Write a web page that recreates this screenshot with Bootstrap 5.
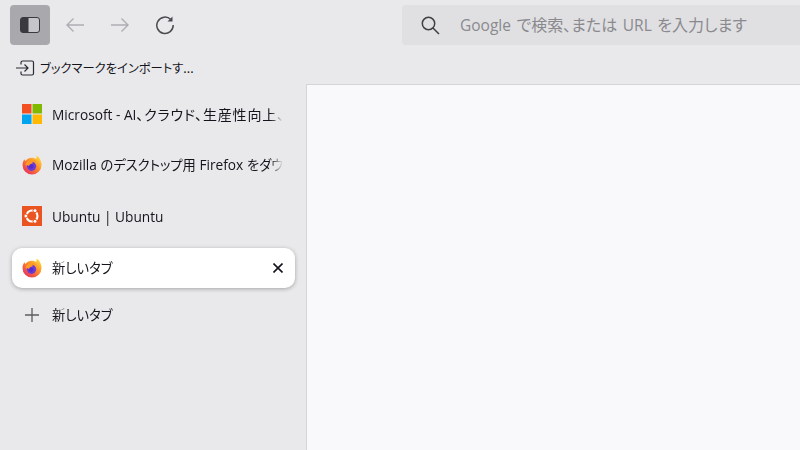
<!DOCTYPE html>
<html lang="ja">
<head>
  <meta charset="UTF-8" />
  <title>新しいタブ</title>
  <link href="https://cdn.jsdelivr.net/npm/bootstrap@5.3.0/dist/css/bootstrap.min.css" rel="stylesheet">
  <style>
    html, body { height: 100%; overflow: hidden; }
    body {
      background-color: #e9e9ec;
      color: #15141a;
      font-family: "Open Sans", "Noto Sans CJK JP", sans-serif;
      font-size: 13.7px;
    }
    .app-frame { width: 800px; height: 450px; }
    .top-strip { height: 50px; padding: 5px 0 5px 10px; }
    .tool-btn { width: 40px; height: 40px; border-radius: 4px; margin-right: 5px; flex: none; }
    .tool-btn.on { background-color: #a9a8ad; }
    .url-box {
      width: 398px;
      height: 40px;
      margin-left: 212px;
      padding-left: 18px;
      background-color: #e0e0e3;
      border-radius: 4px 0 0 4px;
      color: #8a8a8e;
      font-size: 15.5px;
    }
    .url-text { margin-left: 20px; word-spacing: 1.500px; }
    .ja { font-family: "Noto Sans CJK JP", sans-serif; font-feature-settings: "palt"; font-size: 13.3px; }
    .ja-wide { font-size: 14px; letter-spacing: .8px; }
    .url-box .ja { font-size: 16px; }
    .import-row { height: 34px; padding: 2px 0 0 16px; gap: 4px; }
    .import-row .ja { font-size: 12.3px; }
    .lower-area { height: 366px; }
    .side-panel { width: 306px; flex: none; }
    .tab-list { padding: 10px 11px 0 12px; }
    .tab-row { height: 40px; padding-left: 10px; margin-bottom: 11px; border-radius: 10px; gap: 10px; }
    .tab-row.current {
      background-color: #fff;
      box-shadow: 0 1px 4px rgba(0, 0, 0, .3);
      margin-top: 12px;
      margin-bottom: 7px;
    }
    .tab-label {
      width: 231px;
      white-space: nowrap;
      overflow: hidden;
      -webkit-mask-image: linear-gradient(to right, #000 218px, transparent 231px);
      mask-image: linear-gradient(to right, #000 218px, transparent 231px);
    }
    .tab-label.low { padding-top: 2px; }
    .tab-row.current .tab-label { width: 211px; }
    .page-view { background-color: #f9f9fb; border-top: 1px solid #d4d4d8; border-left: 1px solid #d4d4d8; }
  </style>
</head>
<body>
  <svg width="0" height="0" class="position-absolute">
    <defs>
      <linearGradient id="foxBody" x1=".9" y1=".1" x2=".2" y2=".95">
        <stop offset="0" stop-color="#ffd83a"/>
        <stop offset=".45" stop-color="#ff8a2a"/>
        <stop offset="1" stop-color="#e8305c"/>
      </linearGradient>
      <symbol id="firefox" viewBox="0 0 20 20">
        <path d="M14.500.5c2.800 1.700 5 5 5 9.500a9.500 9.500 0 1 1-19 0c0-2.200.8-4.400 2-5.800.2.800.5 1.300 1 1.700C5.200 3.800 7.300 2.800 9.500 2.800c2 0 3.500.4 4.500 1.300.6-1 .8-2.300.5-3.600z" fill="url(#foxBody)"/>
        <circle cx="9.500" cy="11.300" r="4.600" fill="#6a3bd6"/>
        <circle cx="9" cy="11.500" r="2.300" fill="#592acb"/>
        <path d="M3.500 10.500C3.700 7 7 4.700 10.500 5.100c2 .2 3.600 1.200 4.400 2.500-1.300-.7-3-1-4.500-.5.300.5.300 1 .1 1.400-2 .1-3.300 1.100-3.300 2.400-.8-.8-2.700-.9-3.700-.4z" fill="#ff9a24"/>
      </symbol>
    </defs>
  </svg>

  <div class="app-frame d-flex flex-column">
    <div class="top-strip d-flex align-items-center">
      <div class="tool-btn on d-flex align-items-center justify-content-center">
        <svg width="20" height="16" viewBox="0 0 20 16"><rect x=".5" y=".5" width="19" height="15" rx="2.500" fill="#c6c6ca" stroke="#3a393f"/><path d="M3 .5h5.500v15H3a2.500 2.500 0 0 1-2.500-2.500V3A2.500 2.500 0 0 1 3 .5z" fill="#3a393f"/></svg>
      </div>
      <div class="tool-btn d-flex align-items-center justify-content-center">
        <svg width="20" height="16" viewBox="0 0 20 16" fill="none" stroke="#aeaeb2" stroke-width="1.400"><path d="M19 8H2M8.500 1.500 2 8l6.500 6.500"/></svg>
      </div>
      <div class="tool-btn d-flex align-items-center justify-content-center">
        <svg width="20" height="16" viewBox="0 0 20 16" fill="none" stroke="#aeaeb2" stroke-width="1.400"><path d="M1 8h17M11.500 1.500 18 8l-6.500 6.500"/></svg>
      </div>
      <div class="tool-btn d-flex align-items-center justify-content-center">
        <svg width="20" height="20" viewBox="0 0 20 20" fill="none" stroke="#4a4a4f" stroke-width="1.500"><path d="M15.800 4.500A8.200 8.200 0 1 0 18.200 10"/><path d="M17.500 1.500v5h-5z" fill="#4a4a4f" stroke="none"/></svg>
      </div>
      <div class="url-box d-flex align-items-center">
        <svg width="20" height="20" viewBox="0 0 20 20" fill="none" stroke="#3f3f44" stroke-width="1.500" class="flex-shrink-0"><circle cx="8.500" cy="8.500" r="6.200"/><path d="m13 13 6 6"/></svg>
        <span class="url-text">Google <span class="ja">で検索、または</span> URL <span class="ja">を入力します</span></span>
      </div>
    </div>

    <div class="import-row d-flex align-items-center">
      <svg width="20" height="16" viewBox="0 0 20 16" fill="none" stroke="#2b2a33" stroke-width="1.200" class="flex-shrink-0"><path d="M5 4.500V2.500A1.500 1.500 0 0 1 6.500 1H16a1.500 1.500 0 0 1 1.500 1.500v11A1.500 1.500 0 0 1 16 15H6.500A1.500 1.500 0 0 1 5 13.500V11.500"/><path d="M0 8h12M8.500 4.500 12 8l-3.500 3.500"/></svg>
      <span class="ja">ブックマークをインポートす...</span>
    </div>

    <div class="lower-area d-flex">
      <div class="side-panel">
        <div class="tab-list">
          <div class="tab-row d-flex align-items-center">
            <svg width="20" height="20" viewBox="0 0 20 20" class="flex-shrink-0"><rect width="9.500" height="9.500" fill="#f25022"/><rect x="10.500" width="9.500" height="9.500" fill="#7fba00"/><rect y="10.500" width="9.500" height="9.500" fill="#00a4ef"/><rect x="10.500" y="10.500" width="9.500" height="9.500" fill="#ffb900"/></svg>
            <div class="tab-label low">Microsoft - AI<span class="ja ja-wide">、クラウド、生産性向上、</span></div>
          </div>
          <div class="tab-row d-flex align-items-center">
            <svg width="20" height="20" class="flex-shrink-0"><use href="#firefox"/></svg>
            <div class="tab-label">Mozilla <span class="ja">のデスクトップ用</span> Firefox <span class="ja">をダウ</span></div>
          </div>
          <div class="tab-row d-flex align-items-center">
            <svg width="20" height="20" viewBox="0 0 20 20" class="flex-shrink-0"><rect width="20" height="20" fill="#e95420"/><circle cx="10" cy="10" r="5.500" fill="none" stroke="#fff" stroke-width="2.100"/><circle cx="13" cy="4.700" r="2" fill="#fff" stroke="#e95420"/><circle cx="3.900" cy="10" r="2" fill="#fff" stroke="#e95420"/><circle cx="13" cy="15.300" r="2" fill="#fff" stroke="#e95420"/></svg>
            <div class="tab-label low">Ubuntu | Ubuntu</div>
          </div>
          <div class="tab-row current d-flex align-items-center">
            <svg width="20" height="20" class="flex-shrink-0"><use href="#firefox"/></svg>
            <div class="tab-label"><span class="ja">新しいタブ</span></div>
            <svg width="10" height="10" viewBox="0 0 10 10" stroke="#15141a" stroke-width="1.600" class="flex-shrink-0"><path d="m.5.500 9 9M9.500.500l-9 9"/></svg>
          </div>
          <div class="tab-row d-flex align-items-center">
            <svg width="20" height="20" viewBox="0 0 20 20" stroke="#5b5b60" stroke-width="1.300" class="flex-shrink-0"><path d="M10 3v14M3 10h14"/></svg>
            <div class="tab-label"><span class="ja">新しいタブ</span></div>
          </div>
        </div>
      </div>
      <div class="page-view flex-grow-1"></div>
    </div>
  </div>

  <script src="https://cdn.jsdelivr.net/npm/bootstrap@5.3.0/dist/js/bootstrap.bundle.min.js"></script>
</body>
</html>
